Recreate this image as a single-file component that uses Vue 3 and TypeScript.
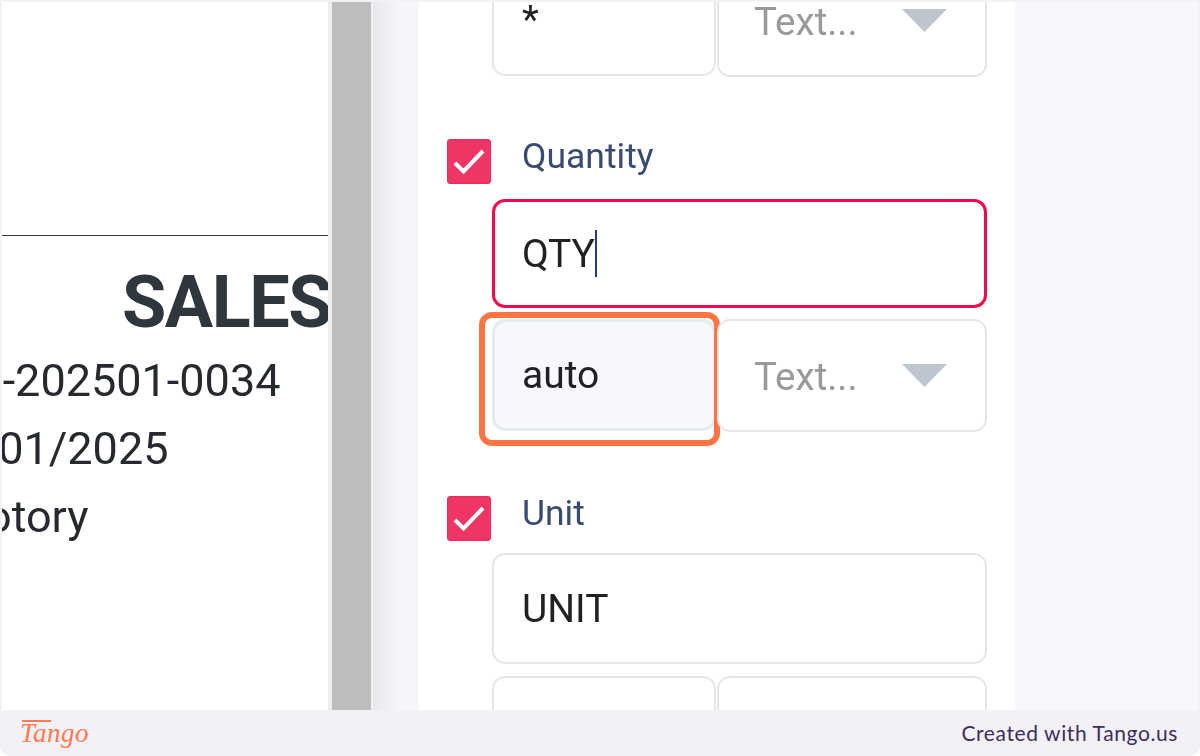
<script setup lang="ts">
const docLines: { text: string; cls: string }[] = [
  { text: 'SO-202501-0034', cls: 'l1' },
  { text: '01/01/2025', cls: 'l2' },
  { text: 'otory', cls: 'l3' }
]
</script>

<template>
  <div class="frame">
    <main class="stage">
      <section class="doc">
        <hr class="rule" />
        <h1 class="title">SALES ORDER</h1>
        <p v-for="l in docLines" :key="l.cls" class="line" :class="l.cls">{{ l.text }}</p>
      </section>
      <div class="divider"></div>
      <div class="gutter"></div>
      <section class="card">
        <div class="pair first">
          <div class="box small"><span class="val">*</span></div>
          <div class="box select">
            <span class="ph">Text...</span>
            <svg class="caret" width="45" height="23" viewBox="0 0 45 23"><polygon points="0,0 45,0 22.5,23" /></svg>
          </div>
        </div>

        <div class="head">
          <span class="check">
            <svg width="42" height="43" viewBox="0 0 42 43"><path d="M7 23 L15.5 31.5 L35 11" fill="none" stroke="#fff" stroke-width="4" /></svg>
          </span>
          <span class="label">Quantity</span>
        </div>
        <div class="box wide focused"><span class="val">QTY</span><i class="cursor"></i></div>
        <div class="pair second">
          <div class="box small active">
            <span class="val">auto</span>
            <div class="highlight"></div>
          </div>
          <div class="box select">
            <span class="ph">Text...</span>
            <svg class="caret" width="45" height="23" viewBox="0 0 45 23"><polygon points="0,0 45,0 22.5,23" /></svg>
          </div>
        </div>

        <div class="head unit">
          <span class="check">
            <svg width="42" height="43" viewBox="0 0 42 43"><path d="M7 23 L15.5 31.5 L35 11" fill="none" stroke="#fff" stroke-width="4" /></svg>
          </span>
          <span class="label">Unit</span>
        </div>
        <div class="box wide plain"><span class="val">UNIT</span></div>
        <div class="pair third">
          <div class="box small"></div>
          <div class="box select"></div>
        </div>
      </section>
      <div class="aside"></div>
    </main>
    <footer class="foot">
      <span class="logo">Tango</span>
      <span class="credit">Created with Tango.us</span>
    </footer>
  </div>
</template>

<style>
html, body { margin: 0; background: #fff; }
</style>

<style scoped>
.frame {
  width: 1200px;
  height: 756px;
  box-sizing: border-box;
  padding: 2px 2px 0;
  background: #f3f1f7;
  border-radius: 0 0 10px 10px;
  display: flex;
  flex-direction: column;
  overflow: hidden;
  font-family: Roboto, sans-serif;
}
.stage {
  height: 708px;
  display: flex;
  overflow: hidden;
  background: #fff;
  filter: blur(0.5px);
}
.doc {
  width: 326px;
  flex: none;
  overflow: hidden;
  background: #fff;
  color: #26292e;
}
.rule {
  margin: 233px 0 0;
  border: 0;
  height: 1px;
  background: #3c3c3c;
}
.title {
  margin: 25px 0 0 120px;
  white-space: nowrap;
  font-size: 72px;
  line-height: 84px;
  font-weight: 700;
  color: #2f363e;
  letter-spacing: -1.5px;
}
.line {
  margin: 0;
  white-space: nowrap;
  font-size: 45px;
  line-height: 68px;
}
.l1 { margin-left: -57px; margin-top: 2px; }
.l2 { margin-left: -73px; }
.l3 { margin-left: -16px; }
.divider {
  width: 45px;
  flex: none;
  box-sizing: border-box;
  background: #bdbdbd;
  border-left: 4px solid #eeeeee;
  border-right: 2px solid #f0f0f0;
}
.gutter {
  width: 45px;
  flex: none;
  background: linear-gradient(90deg, #e6e8ec, #f5f6fa 60%);
}
.card {
  width: 597px;
  flex: none;
  box-sizing: border-box;
  padding: 0 28px;
  background: #fff;
  display: flex;
  flex-direction: column;
  box-shadow: 0 0 2px #ececf2;
}
.aside {
  flex: 1;
  background: #f7f8fc;
}
.pair {
  margin-left: 46px;
  display: flex;
  gap: 1px;
  align-items: flex-start;
  flex: none;
}
.first { margin-top: -38px; }
.second { margin-top: 11px; }
.third { margin-top: 12px; }
.box {
  box-sizing: border-box;
  border: 2px solid #e6e6e6;
  border-radius: 13px;
  background: #fff;
  display: flex;
  align-items: center;
  padding-left: 28px;
  position: relative;
  flex: none;
}
.small { width: 224px; height: 112px; }
.select {
  width: 270px;
  height: 113px;
  padding-left: 35px;
}
.wide { width: 495px; margin-left: 46px; }
.focused {
  height: 109px;
  margin-top: 15px;
  border: 3px solid #ee0a4c;
  padding-left: 27px;
}
.plain { height: 111px; margin-top: 12px; }
.active {
  background: #f7f8fc;
  border: 3px solid #e6eaf2;
  padding-left: 27px;
}
.val {
  font-size: 39px;
  line-height: 46px;
  color: #1f2125;
}
.ph {
  font-size: 38.5px;
  line-height: 46px;
  margin-top: 2px;
  color: #9a9a9a;
}
.caret {
  position: absolute;
  right: 38px;
  top: 43px;
  fill: #bfc5cf;
}
.cursor {
  width: 1.5px;
  height: 47px;
  background: #2a3a80;
}
.highlight {
  position: absolute;
  left: -16px;
  right: -7px;
  top: -10px;
  bottom: -18px;
  border: 6px solid #ff7443;
  border-radius: 13px;
  pointer-events: none;
}
.head {
  display: flex;
  align-items: flex-start;
  flex: none;
  margin-top: 62px;
  height: 45px;
}
.unit { margin-top: 64px; }
.check {
  width: 44px;
  height: 45px;
  box-sizing: border-box;
  margin-left: 1px;
  border: 1px solid #e52f5c;
  border-radius: 3px;
  background: #ee3564;
  display: flex;
}
.label {
  margin-left: 31px;
  margin-top: -4px;
  font-size: 35.5px;
  line-height: 42px;
  color: #3a4a70;
}
.foot {
  height: 46px;
  flex: none;
  display: flex;
  align-items: center;
  justify-content: space-between;
  padding: 0 20px 0 18px;
}
.logo {
  position: relative;
  font-family: "Liberation Serif", serif;
  font-style: italic;
  font-size: 27px;
  line-height: 34px;
  color: #ff7a50;
  letter-spacing: 0.5px;
}
.logo::before {
  content: "";
  position: absolute;
  left: 2px;
  top: 4px;
  width: 29px;
  height: 1.5px;
  background: #ff7a50;
}
.credit {
  font-family: Lato, sans-serif;
  font-size: 21px;
  line-height: 26px;
  color: #3d2f5b;
  letter-spacing: 0.6px;
}
</style>
